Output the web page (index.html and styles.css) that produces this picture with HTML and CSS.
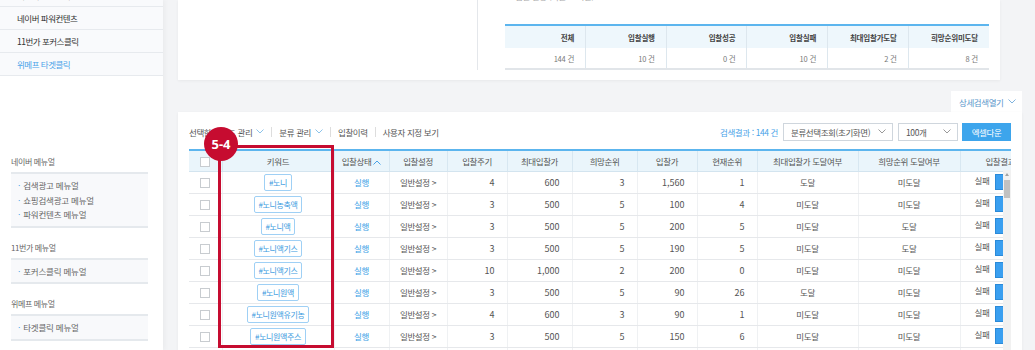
FILE: index.html
```html
<!DOCTYPE html>
<html lang="ko">
<head>
    <meta charset="UTF-8">
    <title>입찰 관리</title>
    <link rel="stylesheet" href="styles.css">
</head>
<body>

<aside class="side">
    <ul class="side-nav">
        <li>네이버 쇼핑검색광고</li>
        <li>네이버 파워컨텐츠</li>
        <li>11번가 포커스클릭</li>
        <li class="on">위메프 타겟클릭</li>
    </ul>
    <div class="manual">
        <h4>네이버 메뉴얼</h4>
        <ul>
            <li>검색광고 메뉴얼</li>
            <li>쇼핑검색광고 메뉴얼</li>
            <li>파워컨텐츠 메뉴얼</li>
        </ul>
        <h4>11번가 메뉴얼</h4>
        <ul>
            <li>포커스클릭 메뉴얼</li>
        </ul>
        <h4>위메프 메뉴얼</h4>
        <ul>
            <li>타겟클릭 메뉴얼</li>
        </ul>
    </div>
</aside>

<main class="content">
    <section class="card summary">
        <div class="summary-left"></div>
        <div class="summary-right">
            <p class="summary-caption">입찰 현황 (최근 24시간)</p>
            <table class="summary-table">
                <tr>
                    <th>전체</th><th>입찰실행</th><th>입찰성공</th><th>입찰실패</th><th>최대입찰가도달</th><th>희망순위미도달</th>
                </tr>
                <tr>
                    <td>144 건</td><td>10 건</td><td>0 건</td><td>10 건</td><td>2 건</td><td>8 건</td>
                </tr>
            </table>
        </div>
    </section>

    <div class="tab-row">
        <div class="detail-tab">상세검색열기
            <svg width="8" height="5" viewBox="0 0 8 5"><path d="M0.5 0.5 L4 4 L7.5 0.5" fill="none" stroke="#7fb3de"/></svg>
        </div>
    </div>

    <section class="card list">
        <div class="toolbar">
            <div class="tool-left">
                <span class="tool">선택한 키워드 관리
                    <svg width="8" height="5" viewBox="0 0 8 5"><path d="M0.5 0.5 L4 4 L7.5 0.5" fill="none" stroke="#8cc3ea"/></svg>
                </span>
                <span class="sep"></span>
                <span class="tool">분류 관리
                    <svg width="8" height="5" viewBox="0 0 8 5"><path d="M0.5 0.5 L4 4 L7.5 0.5" fill="none" stroke="#8cc3ea"/></svg>
                </span>
                <span class="sep"></span>
                <span class="tool">입찰이력</span>
                <span class="sep"></span>
                <span class="tool">사용자 지정 보기</span>
            </div>
            <div class="tool-right">
                <span class="result">검색결과 : 144 건</span>
                <div class="select wide">분류선택조회(초기화면)
                    <svg width="8" height="5" viewBox="0 0 8 5"><path d="M0.5 0.5 L4 4 L7.5 0.5" fill="none" stroke="#999"/></svg>
                </div>
                <div class="select">100개
                    <svg width="8" height="5" viewBox="0 0 8 5"><path d="M0.5 0.5 L4 4 L7.5 0.5" fill="none" stroke="#999"/></svg>
                </div>
                <button class="btn-excel">엑셀다운</button>
            </div>
        </div>

        <div class="grid-wrap">
            <table class="grid">
                <colgroup>
                    <col style="width:33px"><col style="width:112px"><col style="width:55px"><col style="width:58px">
                    <col style="width:60px"><col style="width:65px"><col style="width:65px"><col style="width:60px">
                    <col style="width:60px"><col style="width:101px"><col style="width:102px"><col style="width:80px">
                </colgroup>
                <thead>
                    <tr>
                        <th><span class="chk"></span></th>
                        <th>키워드</th>
                        <th>입찰상태 <svg width="8" height="5" viewBox="0 0 8 5"><path d="M0.5 4.5 L4 1 L7.5 4.5" fill="none" stroke="#4aa3e8"/></svg></th>
                        <th>입찰설정</th>
                        <th>입찰주기</th>
                        <th>최대입찰가</th>
                        <th>희망순위</th>
                        <th>입찰가</th>
                        <th>현재순위</th>
                        <th>최대입찰가 도달여부</th>
                        <th>희망순위 도달여부</th>
                        <th>입찰결과</th>
                    </tr>
                </thead>
                <tbody>
                    <tr>
                        <td><span class="chk"></span></td><td><span class="tag">#노니</span></td>
                        <td class="run">실행</td><td>일반설정 &gt;</td>
                        <td class="num">4</td><td class="num">600</td><td class="num">3</td><td class="num">1,560</td><td class="num">1</td>
                        <td>도달</td><td>미도달</td><td class="res">실패<span class="res-btn"></span></td>
                    </tr>
                    <tr>
                        <td><span class="chk"></span></td><td><span class="tag">#노니농축액</span></td>
                        <td class="run">실행</td><td>일반설정 &gt;</td>
                        <td class="num">3</td><td class="num">500</td><td class="num">5</td><td class="num">100</td><td class="num">4</td>
                        <td>미도달</td><td>미도달</td><td class="res">실패<span class="res-btn"></span></td>
                    </tr>
                    <tr>
                        <td><span class="chk"></span></td><td><span class="tag">#노니액</span></td>
                        <td class="run">실행</td><td>일반설정 &gt;</td>
                        <td class="num">3</td><td class="num">500</td><td class="num">5</td><td class="num">200</td><td class="num">5</td>
                        <td>미도달</td><td>도달</td><td class="res">실패<span class="res-btn"></span></td>
                    </tr>
                    <tr>
                        <td><span class="chk"></span></td><td><span class="tag">#노니액기스</span></td>
                        <td class="run">실행</td><td>일반설정 &gt;</td>
                        <td class="num">3</td><td class="num">500</td><td class="num">5</td><td class="num">190</td><td class="num">5</td>
                        <td>미도달</td><td>도달</td><td class="res">실패<span class="res-btn"></span></td>
                    </tr>
                    <tr>
                        <td><span class="chk"></span></td><td><span class="tag">#노니액기스</span></td>
                        <td class="run">실행</td><td>일반설정 &gt;</td>
                        <td class="num">10</td><td class="num">1,000</td><td class="num">2</td><td class="num">200</td><td class="num">0</td>
                        <td>미도달</td><td>미도달</td><td class="res">실패<span class="res-btn"></span></td>
                    </tr>
                    <tr>
                        <td><span class="chk"></span></td><td><span class="tag">#노니원액</span></td>
                        <td class="run">실행</td><td>일반설정 &gt;</td>
                        <td class="num">3</td><td class="num">500</td><td class="num">5</td><td class="num">90</td><td class="num">26</td>
                        <td>도달</td><td>미도달</td><td class="res">실패<span class="res-btn"></span></td>
                    </tr>
                    <tr>
                        <td><span class="chk"></span></td><td><span class="tag">#노니원액유기농</span></td>
                        <td class="run">실행</td><td>일반설정 &gt;</td>
                        <td class="num">4</td><td class="num">600</td><td class="num">3</td><td class="num">90</td><td class="num">1</td>
                        <td>미도달</td><td>미도달</td><td class="res">실패<span class="res-btn"></span></td>
                    </tr>
                    <tr>
                        <td><span class="chk"></span></td><td><span class="tag">#노니원액주스</span></td>
                        <td class="run">실행</td><td>일반설정 &gt;</td>
                        <td class="num">3</td><td class="num">500</td><td class="num">5</td><td class="num">150</td><td class="num">6</td>
                        <td>미도달</td><td>미도달</td><td class="res">실패<span class="res-btn"></span></td>
                    </tr>
                    <tr>
                        <td><span class="chk"></span></td><td><span class="tag">#노니주스</span></td>
                        <td class="run">실행</td><td>일반설정 &gt;</td>
                        <td class="num">3</td><td class="num">500</td><td class="num">5</td><td class="num">120</td><td class="num">7</td>
                        <td>미도달</td><td>미도달</td><td class="res">실패<span class="res-btn"></span></td>
                    </tr>
                </tbody>
            </table>
            <div class="vscroll"><div class="vscroll-thumb"></div></div>
        </div>

        <!-- 설명용 표시 -->
        <div class="callout"></div>
        <div class="badge">5-4</div>
    </section>
</main>

</body>
</html>
```

FILE: styles.css
```css
* {
    box-sizing: border-box;
}
body {
    margin: 0;
    height: 350px;
    overflow: hidden;
    display: flex;
    background-color: #f3f4f6;
    font-family: "Noto Sans CJK KR", "Noto Sans", sans-serif;
    font-size: 8.5px;
    letter-spacing: -0.4px;
    color: #555;
}

/* 왼쪽 메뉴 */
.side {
    width: 163px;
    flex: none;
    background-color: #fff;
    box-shadow: 2px 0 5px rgba(0, 0, 0, 0.04);
}
.side-nav {
    list-style: none;
    margin: -16px 0 0;
    padding: 0;
}
.side-nav li {
    height: 23px;
    line-height: 22px;
    padding-left: 17px;
    border-bottom: 1px solid #e7eaee;
    background-color: #f9fafc;
    color: #333;
    letter-spacing: -0.5px;
}
.side-nav li.on {
    color: #4aa3e8;
}
.manual {
    margin-top: 80px;
    padding: 0 15px 0 11px;
}
.manual h4 {
    margin: 14px 0 4px;
    font-size: 8px;
    font-weight: normal;
    line-height: 12px;
    color: #666;
}
.manual h4:first-child {
    margin-top: 0;
}
.manual ul {
    list-style: none;
    margin: 0;
    padding: 4px 7px;
    background-color: #f8f9fb;
    border-top: 2px solid #e5e9ed;
    border-bottom: 2px solid #e5e9ed;
}
.manual li {
    line-height: 14.5px;
    color: #666;
    letter-spacing: -0.2px;
}
.manual li::before {
    content: "·";
    color: #4aa3e8;
    margin-right: 3px;
}

/* 본문 */
.content {
    flex: 1;
    min-width: 0;
    padding: 0 13px 0 15px;
}
.card {
    background-color: #fff;
    box-shadow: 0 1px 3px rgba(0, 0, 0, 0.05);
}
.summary {
    display: flex;
    margin-right: 22px;
    padding-bottom: 10px;
}
.summary-left {
    width: 299px;
}
.summary-right {
    flex: 1;
    border-left: 1px solid #e4e7eb;
    padding-left: 27px;
}
.summary-caption {
    margin: -10px 0 0 10px;
    line-height: 12px;
    color: #aaa;
}
.summary-table {
    margin-top: 22px;
    width: 484px;
    border-collapse: collapse;
    table-layout: fixed;
    font-size: 7.5px;
    letter-spacing: -0.2px;
}
.summary-table th {
    height: 23px;
    padding: 0 11px 0 0;
    text-align: right;
    background-color: #eef7fc;
    border-top: 2px solid #5cb5ee;
    color: #444;
    font-weight: bold;
}
.summary-table td {
    height: 21px;
    padding: 0 11px 0 0;
    text-align: right;
    border-bottom: 2px solid #e1e5e9;
    color: #777;
}
.summary-table th + th,
.summary-table td + td {
    border-left: 1px solid #dde7ee;
}

.tab-row {
    display: flex;
    justify-content: flex-end;
    margin-top: 11px;
}
.detail-tab {
    display: flex;
    align-items: center;
    gap: 4px;
    width: 71px;
    height: 21px;
    padding-left: 8px;
    background-color: #fff;
    color: #5b97cb;
}

.list {
    position: relative;
    padding: 10px 11px 0;
    height: 260px;
}
.toolbar {
    display: flex;
    justify-content: space-between;
    align-items: center;
    height: 19px;
}
.tool-left,
.tool-right {
    display: flex;
    align-items: center;
}
.tool {
    display: flex;
    align-items: center;
    gap: 4px;
    color: #555;
}
.sep {
    width: 1px;
    height: 10px;
    margin: 0 7px;
    background-color: #ddd;
}
.result {
    color: #4aa3e8;
    margin-right: 5px;
}
.select {
    display: flex;
    align-items: center;
    justify-content: space-between;
    width: 60px;
    height: 18px;
    padding: 0 6px 0 7px;
    margin-right: 4px;
    border: 1px solid #cfd6dd;
    background-color: #fff;
    color: #555;
}
.select.wide {
    width: 110px;
    margin-right: 5px;
}
.btn-excel {
    width: 49px;
    height: 18px;
    padding: 0;
    border: none;
    background-color: #3da5ec;
    color: #fff;
    font-family: inherit;
    font-size: 8.5px;
    letter-spacing: -0.4px;
}

/* 목록 표 */
.grid-wrap {
    position: relative;
    margin-top: 8px;
    overflow: hidden;
}
.grid {
    width: 851px;
    border-collapse: collapse;
    table-layout: fixed;
}
.grid th {
    height: 21px;
    padding: 0;
    font-weight: normal;
    color: #555;
    background-color: #eaf5fb;
    border-top: 2px solid #5cb5ee;
    border-bottom: 1px solid #d3e4ef;
    white-space: nowrap;
}
.grid th + th {
    border-left: 1px solid #d7e7f1;
}
.grid td {
    height: 22px;
    padding: 0;
    text-align: center;
    border-bottom: 1px solid #e6e8eb;
    white-space: nowrap;
}
.grid td + td {
    border-left: 1px solid #eff1f3;
}
.grid td.num {
    text-align: right;
    padding-right: 12px;
    font-size: 9px;
    letter-spacing: 0;
}
.grid td.run {
    color: #3d9fe6;
}
.grid td.res {
    text-align: left;
    padding-left: 14px;
}
.chk {
    display: inline-block;
    width: 10px;
    height: 10px;
    vertical-align: middle;
    border: 1px solid #c8ccd0;
    background-color: #fff;
}
.tag {
    display: inline-block;
    height: 17px;
    line-height: 15px;
    padding: 0 4px;
    border: 1px solid #9fd0f5;
    border-radius: 2px;
    color: #3d9be0;
    font-size: 8px;
    vertical-align: middle;
}
.res-btn {
    display: inline-block;
    width: 30px;
    height: 16px;
    margin-left: 6px;
    vertical-align: middle;
    background-color: #3a9ff0;
    border: 1px solid #2b8ad8;
}
.vscroll {
    position: absolute;
    right: 0;
    top: 21px;
    bottom: 0;
    width: 8px;
    padding-top: 10px;
    background-color: #f1f1f1;
}
.vscroll::before {
    content: "";
    position: absolute;
    top: 3px;
    left: 2px;
    border-left: 2px solid transparent;
    border-right: 2px solid transparent;
    border-bottom: 3px solid #a3a3a3;
}
.vscroll-thumb {
    width: 6px;
    height: 18px;
    margin-left: 1px;
    background-color: #c1c1c1;
}

.callout {
    position: absolute;
    left: 40px;
    top: 33px;
    width: 116px;
    height: 203px;
    border: 3px solid #c60c30;
}
.badge {
    position: absolute;
    left: 26px;
    top: 15px;
    width: 34px;
    height: 34px;
    border-radius: 50%;
    background-color: #c60c30;
    color: #fff;
    font-family: "Noto Sans", sans-serif;
    font-size: 13px;
    font-weight: bold;
    line-height: 34px;
    letter-spacing: 0;
    text-align: center;
}
```
